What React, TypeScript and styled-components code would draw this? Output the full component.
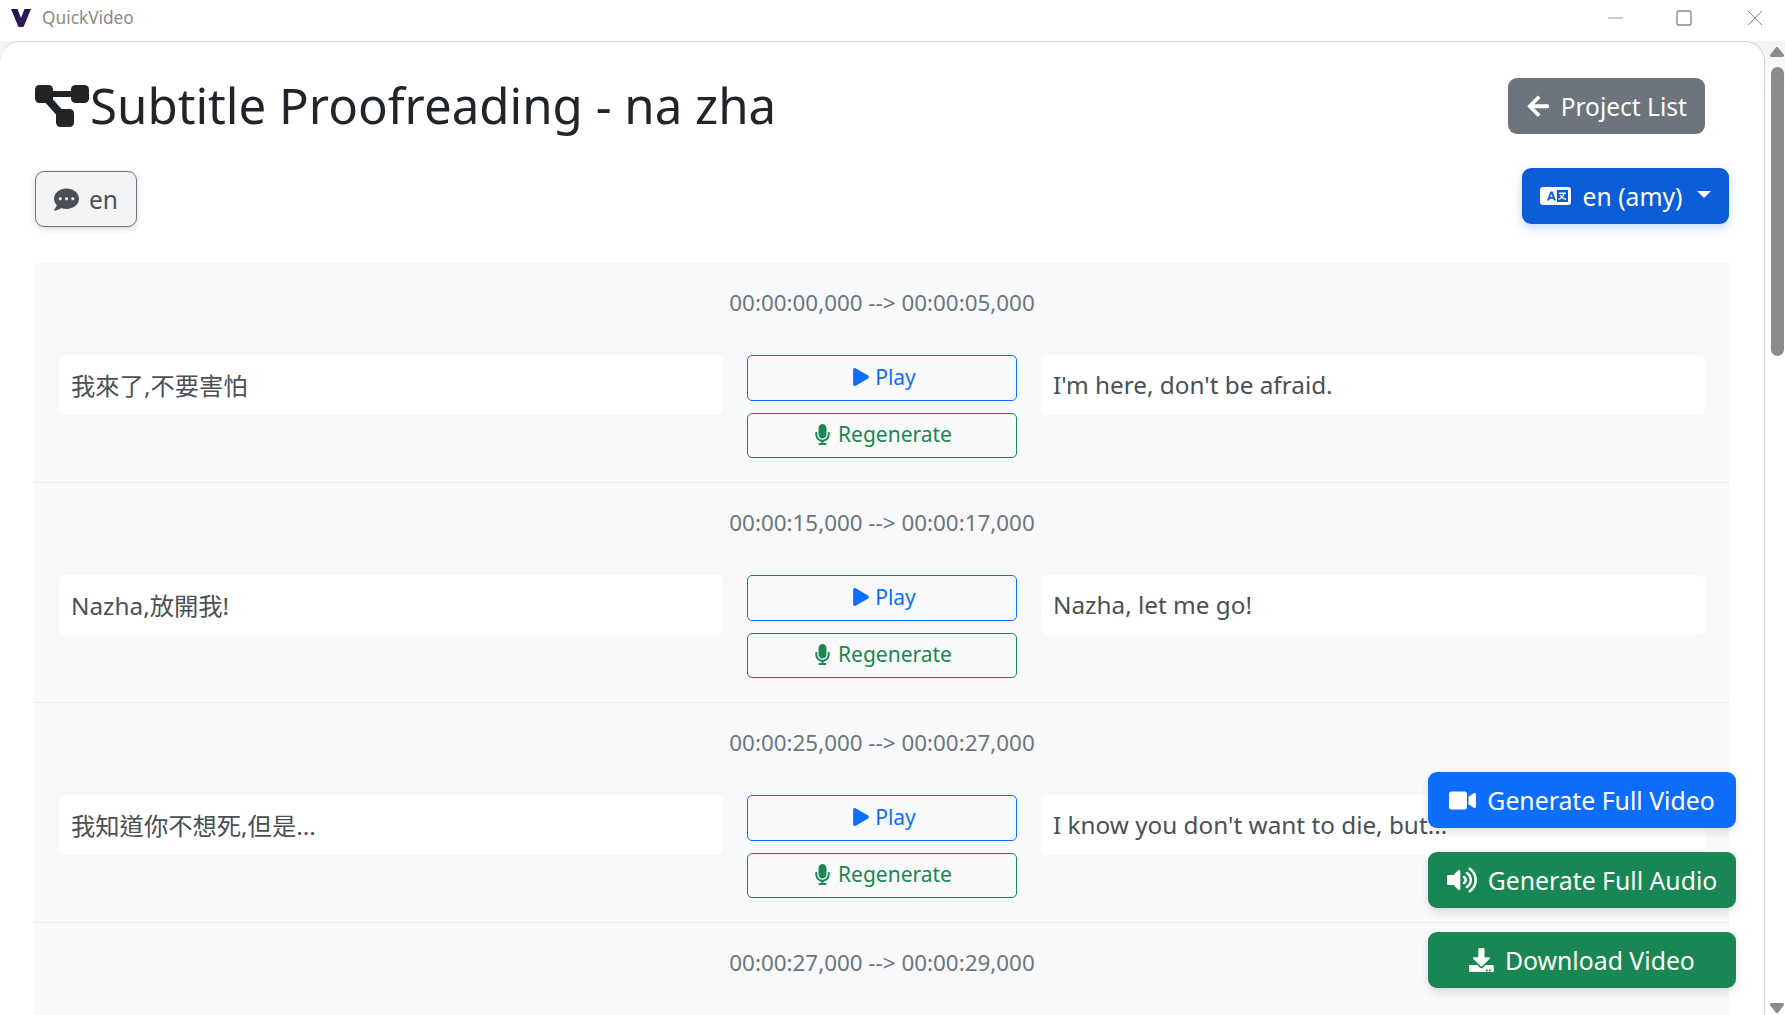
import styled, { createGlobalStyle } from "styled-components";
import {
  FaArrowLeft,
  FaCommentDots,
  FaDownload,
  FaMicrophone,
  FaPlay,
  FaVideo,
  FaVolumeUp,
} from "react-icons/fa";

const GlobalStyle = createGlobalStyle`
  * { box-sizing: border-box; }
  html, body { margin: 0; height: 100%; overflow: hidden; }
  body {
    font-family: "Noto Sans", "Noto Sans CJK TC", sans-serif;
    background: #fff;
    color: #212529;
  }
`;

const rows = [
  { time: "00:00:00,000 --> 00:00:05,000", source: "我來了,不要害怕", target: "I'm here, don't be afraid." },
  { time: "00:00:15,000 --> 00:00:17,000", source: "Nazha,放開我!", target: "Nazha, let me go!" },
  { time: "00:00:25,000 --> 00:00:27,000", source: "我知道你不想死,但是...", target: "I know you don't want to die, but..." },
  { time: "00:00:27,000 --> 00:00:29,000", source: "", target: "" },
];

function App() {
  return (
    <Shell>
      <GlobalStyle />
      <TitleBar>
        <AppName>
          <svg width="20" height="18" viewBox="0 0 20 18">
            <defs>
              <linearGradient id="logo" x1="0" y1="0" x2="1" y2="1">
                <stop offset="0" stopColor="#16164a" />
                <stop offset="1" stopColor="#3a1f5c" />
              </linearGradient>
            </defs>
            <path d="M0 0h6.5l3.5 9 3.5-9H20l-7.5 18h-5z" fill="url(#logo)" />
          </svg>
          QuickVideo
        </AppName>
        <WindowControls>
          <svg width="16" height="16" viewBox="0 0 16 16">
            <path d="M0 8h15" stroke="#9a9a9a" strokeWidth="1" fill="none" />
          </svg>
          <svg width="16" height="16" viewBox="0 0 16 16">
            <rect x="1" y="1" width="14" height="14" rx="1.5" stroke="#8a8a8a" strokeWidth="1.4" fill="none" />
          </svg>
          <svg width="16" height="16" viewBox="0 0 16 16">
            <path d="M1 1l14 14M15 1L1 15" stroke="#8a8a8a" strokeWidth="1" fill="none" />
          </svg>
        </WindowControls>
      </TitleBar>
      <Workspace>
        <Panel>
          <Header>
            <Heading>
              <svg width="54" height="42" viewBox="0 0 54 42" fill="#212529">
                <rect x="0" y="0" width="18" height="18" rx="4.5" />
                <rect x="36" y="0" width="18" height="18" rx="4.5" />
                <rect x="21" y="24" width="18" height="18" rx="4.5" />
                <rect x="12" y="6" width="30" height="6" />
                <path d="M8 15l6-5 17 19-6 5z" />
              </svg>
              <HeadingText>Subtitle Proofreading - na zha</HeadingText>
            </Heading>
            <BackButton>
              <FaArrowLeft />
              Project List
            </BackButton>
          </Header>
          <Toolbar>
            <LanguageTab>
              <FaCommentDots />
              en
            </LanguageTab>
            <VoiceSelect>
              <svg width="31" height="18" viewBox="0 0 31 18">
                <rect width="31" height="18" rx="3" fill="#fff" />
                <path d="M7 13.5L10.4 4.5h2.2l3.4 9h-2.2l-.6-1.8H9.8l-.6 1.8zM10.4 10h2.2l-1.1-3.2z" fill="#0b5ed7" fillRule="evenodd" />
                <rect x="17" y="3" width="11" height="12" fill="#0b5ed7" />
                <path d="M19 5.5h7v1.4h-1.5c-.3 1.4-.9 2.5-1.7 3.4.8.5 1.8.9 3.2 1.2v1.5c-1.7-.3-3-.9-4-1.7-1 .8-2.2 1.3-3.6 1.7v-1.5c1-.3 1.9-.7 2.6-1.3-.7-.8-1.1-1.6-1.4-2.5h1.5c.2.6.5 1.1.9 1.5.5-.6.9-1.3 1.1-2.3H19z" fill="#fff" />
              </svg>
              en (amy)
              <Caret />
            </VoiceSelect>
          </Toolbar>
          <SubtitleList>
            {rows.map((row) => (
              <SubtitleRow key={row.time}>
                <TimeCode>{row.time}</TimeCode>
                {row.source && (
                  <Columns>
                    <TextBox>{row.source}</TextBox>
                    <Actions>
                      <OutlineButton $color="#0d6efd">
                        <PlayIcon size={18} />
                        Play
                      </OutlineButton>
                      <OutlineButton $color="#198754">
                        <FaMicrophone />
                        Regenerate
                      </OutlineButton>
                    </Actions>
                    <TextBox>{row.target}</TextBox>
                  </Columns>
                )}
              </SubtitleRow>
            ))}
          </SubtitleList>
          <FloatingActions>
            <FloatingButton $color="#0d6efd">
              <FaVideo size={27} />
              Generate Full Video
            </FloatingButton>
            <FloatingButton $color="#198754">
              <FaVolumeUp size={30} />
              Generate Full Audio
            </FloatingButton>
            <FloatingButton $color="#198754">
              <FaDownload />
              Download Video
            </FloatingButton>
          </FloatingActions>
        </Panel>
        <Scrollbar>
          <ScrollArrow viewBox="0 0 14 10">
            <path d="M7 1.5L12.5 8.5H1.5z" />
          </ScrollArrow>
          <Thumb />
          <ScrollArrow viewBox="0 0 14 10">
            <path d="M1.5 1.5H12.5L7 8.5z" />
          </ScrollArrow>
        </Scrollbar>
      </Workspace>
    </Shell>
  );
}

const Shell = styled.div`
  height: 100vh;
  display: flex;
  flex-direction: column;
`;

const TitleBar = styled.div`
  height: 41px;
  flex: none;
  display: flex;
  align-items: center;
  justify-content: space-between;
  padding: 0 22px 6px 11px;
  background: #fff;
`;

const AppName = styled.div`
  display: flex;
  align-items: center;
  gap: 11px;
  font-size: 17.3px;
  color: #8a8a8a;
`;

const WindowControls = styled.div`
  display: flex;
  align-items: center;
  gap: 52px;

  svg:last-child {
    margin-left: 3px;
  }
`;

const Workspace = styled.div`
  flex: 1;
  min-height: 0;
  display: flex;
  background: linear-gradient(#f3f3f3, #fff 60px);
`;

const Panel = styled.div`
  position: relative;
  flex: 1;
  min-width: 0;
  overflow: hidden;
  background: #fff;
  border: 1px solid #d2d2d2;
  border-width: 1px 1px 0 0;
  border-top-left-radius: 20px;
  border-top-right-radius: 20px;
  padding: 36px 35px 0 35px;
`;

const Header = styled.div`
  display: flex;
  align-items: center;
  justify-content: space-between;
  padding-right: 24px;
  margin-bottom: 34px;
`;

const Heading = styled.h1`
  display: flex;
  align-items: center;
  gap: 1px;
  margin: 0;
  font-size: 49.2px;
  font-weight: 400;
  line-height: 56px;
  color: #212529;
`;

const HeadingText = styled.span`
  margin-top: -2px;
`;

const BackButton = styled.button`
  display: inline-flex;
  align-items: center;
  justify-content: center;
  gap: 10px;
  width: 197px;
  height: 56px;
  border: none;
  border-radius: 9px;
  background: #6c757d;
  color: #fff;
  font-family: inherit;
  font-size: 24.5px;
`;

const Toolbar = styled.div`
  display: flex;
  align-items: flex-start;
  justify-content: space-between;
  height: 95px;
`;

const LanguageTab = styled.button`
  display: inline-flex;
  align-items: center;
  justify-content: center;
  gap: 10px;
  width: 102px;
  height: 56px;
  margin-top: 3px;
  border: 1px solid #6c757d;
  border-radius: 9px;
  background: #f3f4f6;
  box-shadow: 0 2px 6px rgba(0, 0, 0, 0.15);
  color: #495057;
  font-family: inherit;
  font-size: 24.5px;

  svg {
    font-size: 25px;
  }
`;

const VoiceSelect = styled.button`
  display: inline-flex;
  align-items: center;
  justify-content: center;
  gap: 12px;
  width: 207px;
  height: 56px;
  border: none;
  border-radius: 9px;
  background: #0b5ed7;
  box-shadow: 0 4px 10px rgba(13, 110, 253, 0.25);
  color: #fff;
  font-family: inherit;
  font-size: 24.7px;
`;

const Caret = styled.span`
  width: 0;
  height: 0;
  margin: -4px 0 0 3px;
  border-style: solid;
  border-width: 7px 7px 0 7px;
  border-color: #fff transparent transparent transparent;
`;

const SubtitleList = styled.div`
  background: #f8f9fa;
`;

const SubtitleRow = styled.div`
  height: 220px;
  padding: 24px 24px 0 24px;
  border-bottom: 1px solid #e9ecef;
`;

const TimeCode = styled.div`
  height: 68px;
  text-align: center;
  font-size: 22.4px;
  line-height: 32px;
  color: #6c757d;
`;

const Columns = styled.div`
  display: grid;
  grid-template-columns: 1fr 270px 1fr;
  gap: 24px;
  align-items: start;
`;

const TextBox = styled.div`
  height: 60px;
  display: flex;
  align-items: center;
  padding: 0 12px 2px;
  border-radius: 5px;
  background: #fff;
  font-size: 24.3px;
  color: #495057;
  white-space: nowrap;
  overflow: hidden;
`;

const Actions = styled.div`
  display: flex;
  flex-direction: column;
  gap: 12px;
`;

const OutlineButton = styled.button<{ $color: string }>`
  display: flex;
  align-items: center;
  justify-content: center;
  gap: 5px;
  height: 45.5px;
  padding: 0 0 2px;
  border: 1px solid ${(p) => p.$color};
  border-radius: 5px;
  background: transparent;
  color: ${(p) => p.$color};
  font-family: inherit;
  font-size: 21px;
`;

const PlayIcon = styled(FaPlay)`
  margin-left: 4px;
`;

const FloatingActions = styled.div`
  position: absolute;
  top: 730px;
  right: 28px;
  width: 308px;
  display: flex;
  flex-direction: column;
  gap: 24px;
`;

const FloatingButton = styled.button<{ $color: string }>`
  display: flex;
  align-items: center;
  justify-content: center;
  gap: 11px;
  height: 56px;
  border: none;
  border-radius: 9px;
  background: ${(p) => p.$color};
  box-shadow: 0 4px 10px rgba(0, 0, 0, 0.12);
  color: #fff;
  font-family: inherit;
  font-size: 24.8px;
`;

const Scrollbar = styled.div`
  width: 20px;
  flex: none;
  display: flex;
  flex-direction: column;
  align-items: flex-end;
  padding: 6px 1px 2px 0;
`;

const ScrollArrow = styled.svg`
  width: 14px;
  height: 10px;
  flex: none;

  path {
    fill: #8b8b8b;
    stroke: #8b8b8b;
    stroke-width: 3;
    stroke-linejoin: round;
  }
`;

const Thumb = styled.div`
  width: 13px;
  height: 289px;
  margin: 10px 0 auto;
  border-radius: 7px;
  background: #8b8b8b;
`;

export default App;
